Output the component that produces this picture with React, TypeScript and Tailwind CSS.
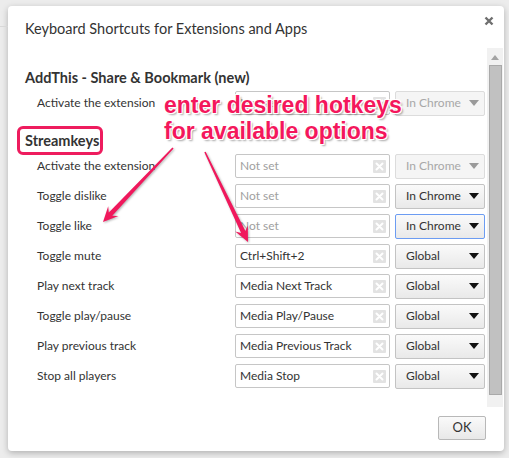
import React from 'react';

type Shortcut = {
  label: string;
  value?: string;
  scope: 'In Chrome' | 'Global';
  disabled?: boolean;
  focused?: boolean;
};

const addThis: Shortcut[] = [
  { label: 'Activate the extension', scope: 'In Chrome', disabled: true },
];

const streamkeys: Shortcut[] = [
  { label: 'Activate the extension', scope: 'In Chrome', disabled: true },
  { label: 'Toggle dislike', scope: 'In Chrome' },
  { label: 'Toggle like', scope: 'In Chrome', focused: true },
  { label: 'Toggle mute', value: 'Ctrl+Shift+2', scope: 'Global' },
  { label: 'Play next track', value: 'Media Next Track', scope: 'Global' },
  { label: 'Toggle play/pause', value: 'Media Play/Pause', scope: 'Global' },
  { label: 'Play previous track', value: 'Media Previous Track', scope: 'Global' },
  { label: 'Stop all players', value: 'Media Stop', scope: 'Global' },
];

function ClearIcon() {
  return (
    <span className="flex h-[13px] w-[13px] items-center justify-center rounded-[1px] bg-[#e2e2e2]">
      <svg width="9" height="9" viewBox="0 0 9 9">
        <path d="M1.5 1.5l6 6M7.5 1.5l-6 6" stroke="#fff" strokeWidth="2" strokeLinecap="round" />
      </svg>
    </span>
  );
}

function ShortcutRow({ s }: { s: Shortcut }) {
  return (
    <div className="flex h-[30px] items-center">
      <div className="w-[227px] pl-[29px] text-[12px] text-[#333]">{s.label}</div>
      <div className="flex h-[24px] w-[155px] items-center justify-between rounded-[2px] border border-[#c6c6c6] bg-white pl-[4px] pr-[3px] text-[12px]">
        {s.value ? (
          <span className="text-[#333]">{s.value}</span>
        ) : (
          <span className="text-[#a0a0a0]">Not set</span>
        )}
        <ClearIcon />
      </div>
      <div
        className={
          'ml-[5px] flex h-[25px] w-[90px] items-center justify-between rounded-[2px] border pl-[10px] pr-[5px] text-[12px] ' +
          (s.disabled
            ? 'border-[#dcdcdc] bg-[#f5f5f5] text-[#a8a8a8]'
            : s.focused
              ? 'border-[#6c9cf2] bg-gradient-to-b from-[#fafafa] to-[#e9e9e9] text-[#333]'
              : 'border-[#c3c3c3] bg-gradient-to-b from-[#fafafa] to-[#e9e9e9] text-[#333]')
        }
      >
        <span>{s.scope}</span>
        <svg width="10" height="6" viewBox="0 0 10 6">
          <path d="M0 0h10L5 6z" fill={s.disabled ? '#9a9a9a' : '#111'} />
        </svg>
      </div>
    </div>
  );
}

// tapered arrow polygon from (x1,y1) to the tip (x2,y2)
function arrowPoints(x1: number, y1: number, x2: number, y2: number) {
  const dx = x2 - x1;
  const dy = y2 - y1;
  const len = Math.hypot(dx, dy);
  const ux = dx / len;
  const uy = dy / len;
  const nx = -uy;
  const ny = ux;
  const head = 15;
  const bx = x2 - ux * head;
  const by = y2 - uy * head;
  const nb = x2 - ux * (head - 4);
  const nby = y2 - uy * (head - 4);
  const p = (x: number, y: number) => `${x.toFixed(1)},${y.toFixed(1)}`;
  return [
    p(x1 + nx * 0.8, y1 + ny * 0.8),
    p(nb + nx * 2.4, nby + ny * 2.4),
    p(bx + nx * 7, by + ny * 7),
    p(x2, y2),
    p(bx - nx * 7, by - ny * 7),
    p(nb - nx * 2.4, nby - ny * 2.4),
    p(x1 - nx * 0.8, y1 - ny * 0.8),
  ].join(' ');
}

const callout =
  "font-['Liberation_Sans',Arial,sans-serif] text-[23px] font-bold leading-[26px] text-[#f4175c] [text-shadow:-1px_-1px_0_#fff,1px_-1px_0_#fff,-1px_1px_0_#fff,1px_1px_0_#fff,2px_2px_2px_rgba(0,0,0,0.35)]";

export default function App() {
  return (
    <div className="relative h-[458px] w-[509px] overflow-hidden bg-[#ececec] font-[family-name:Lato,Open_Sans,sans-serif]">
      <div className="absolute left-0 top-[26px] h-px w-[8px] bg-[#d8d8d8]" />

      <div className="ml-[8px] mt-[6px] flex h-[445px] w-[496px] flex-col rounded-[4px] bg-white shadow-[0_2px_6px_rgba(0,0,0,0.25)]">
        {/* title bar */}
        <div className="flex h-[42px] items-start justify-between pl-[17px] pr-[10px]">
          <h1 className="mt-[12px] text-[14.5px] text-[#333]">Keyboard Shortcuts for Extensions and Apps</h1>
          <svg className="mt-[10px]" width="10" height="10" viewBox="0 0 10 10">
            <path d="M1.5 1.5l7 7M8.5 1.5l-7 7" stroke="#6f6f6f" strokeWidth="2.4" />
          </svg>
        </div>

        {/* scrolling list */}
        <div className="flex h-[359px]">
          <div className="flex-1 overflow-hidden">
            <div className="ml-[17px] mt-[20px] flex h-[20px] items-center text-[14.5px] font-bold text-[#333]">
              AddThis - Share &amp; Bookmark (new)
            </div>
            {addThis.map((s, i) => (
              <ShortcutRow key={i} s={s} />
            ))}
            <div className="ml-[17px] mt-[13px] flex h-[20px] items-center text-[14.5px] font-bold text-[#333]">
              Streamkeys
            </div>
            {streamkeys.map((s, i) => (
              <ShortcutRow key={i} s={s} />
            ))}
          </div>
          <div className="mr-[1px] flex w-[16px] flex-col items-center bg-[#f1f1f1]">
            <svg className="mt-[7px]" width="8" height="5" viewBox="0 0 8 5">
              <path d="M0 5L4 0l4 5z" fill="#a3a3a3" />
            </svg>
            <div className="mt-[5px] h-[330px] w-[13px] border border-[#a9a9a9] bg-[#c1c1c1]" />
          </div>
        </div>

        {/* footer */}
        <div className="flex flex-1 items-start justify-end pr-[18px] pt-[9px]">
          <button className="h-[24px] w-[48px] rounded-[2px] border border-[#b8b8b8] bg-gradient-to-b from-[#fafafa] to-[#e8e8e8] text-[13px] text-[#333]">
            OK
          </button>
        </div>
      </div>

      {/* annotation overlay */}
      <div className="absolute left-[17px] top-[126px] h-[29px] w-[86px] rounded-[6px] border-[3px] border-[#ee1c5e]" />
      <div className="absolute left-[164px] top-[92px]">
        <div className={callout}>enter desired hotkeys</div>
        <div className={callout}>for available options</div>
      </div>
      <svg className="pointer-events-none absolute left-0 top-0" width="509" height="458">
        <g fill="#f0185c" style={{ filter: 'drop-shadow(1px 1px 1px rgba(0,0,0,0.3))' }}>
          <polygon points={arrowPoints(173, 148, 103, 222)} />
          <polygon points={arrowPoints(205, 152, 248, 242)} />
        </g>
      </svg>
    </div>
  );
}
